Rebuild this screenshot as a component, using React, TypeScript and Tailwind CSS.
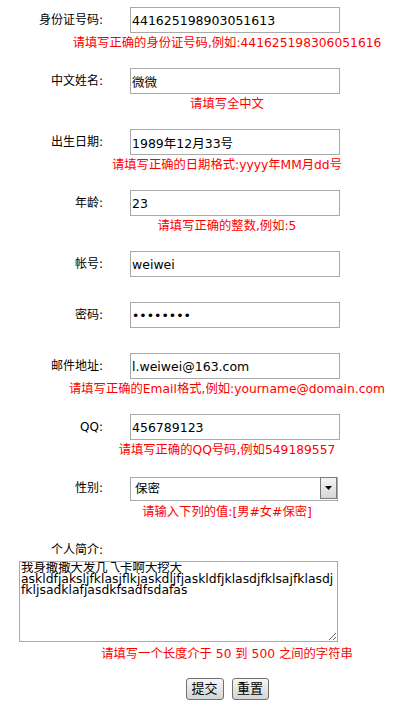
import React from "react";

const font = { fontFamily: '"DejaVu Sans", "Noto Sans CJK SC", sans-serif' };

type FieldProps = {
  label: string;
  value: string;
  type?: string;
  error?: string;
  className?: string;
};

const Field: React.FC<FieldProps> = ({ label, value, type = "text", error, className = "" }) => {
  return (
    <div className={className}>
      <div className="flex h-[26px] items-center">
        <label className="w-[103px] text-right text-[12px] leading-[14px] text-black">{label}</label>
        <input
          type={type}
          defaultValue={value}
          className="ml-[27px] h-[26px] w-[210px] border border-[#a9a9a9] bg-white px-[1px] text-[12.5px] text-black outline-none"
          style={font}
        />
      </div>
      {error && (
        <p className="mt-[3px] h-[14px] pl-[38px] text-center text-[12.3px] leading-[14px] whitespace-nowrap text-[#ff0000]">
          {error}
        </p>
      )}
    </div>
  );
};

const bio =
  "我身撒撒大发几乁卡啊大挖大\naskldfjaksljfklasjflkjaskdljfjaskldfjklasdjfklsajfklasdj\nfkljsadklafjasdkfsadfsdafas";

export default function App() {
  return (
    <div className="min-h-[720px] w-full bg-white pt-[7px]" style={font}>
      <Field
        label="身份证号码:"
        value="441625198903051613"
        error="请填写正确的身份证号码,例如:441625198306051616"
      />
      <Field className="mt-[18px]" label="中文姓名:" value="微微" error="请填写全中文" />
      <Field
        className="mt-[18px]"
        label="出生日期:"
        value="1989年12月33号"
        error="请填写正确的日期格式:yyyy年MM月dd号"
      />
      <Field className="mt-[18px]" label="年龄:" value="23" error="请填写正确的整数,例如:5" />
      <Field className="mt-[18px]" label="帐号:" value="weiwei" />
      <Field className="mt-[25px]" label="密码:" value="12345678" type="password" />
      <Field
        className="mt-[25px]"
        label="邮件地址:"
        value="l.weiwei@163.com"
        error="请填写正确的Email格式,例如:yourname@domain.com"
      />
      <Field className="mt-[18px]" label="QQ:" value="456789123" error="请填写正确的QQ号码,例如549189557" />

      {/* gender select */}
      <div className="mt-[19px]">
        <div className="flex h-[24px] items-center">
          <label className="w-[103px] text-right text-[12px] leading-[14px] text-black">性别:</label>
          <div className="relative ml-[27px] h-[24px] w-[208px]">
            <select
              defaultValue="保密"
              className="h-full w-full appearance-none border border-[#a9a9a9] bg-white pl-[4px] text-[12.5px] text-black outline-none"
              style={font}
            >
              <option>男</option>
              <option>女</option>
              <option>保密</option>
            </select>
            <div className="pointer-events-none absolute top-[1px] right-[1px] flex h-[22px] w-[17px] items-center justify-center border border-[#7a7a7a] bg-linear-to-b from-[#f4f4f4] to-[#d6d6d6]">
              <svg width="7" height="4" viewBox="0 0 7 4">
                <path d="M0 0h7L3.5 4z" fill="#000" />
              </svg>
            </div>
          </div>
        </div>
        <p className="mt-[5px] h-[14px] pl-[38px] text-center text-[12.3px] leading-[14px] whitespace-nowrap text-[#ff0000]">
          请输入下列的值:[男#女#保密]
        </p>
      </div>

      {/* bio */}
      <div className="mt-[24px]">
        <label className="block w-[103px] text-right text-[12px] leading-[14px] text-black">个人简介:</label>
        <textarea
          defaultValue={bio}
          wrap="off"
          className="mt-[4px] ml-[19px] block h-[81px] w-[319px] overflow-hidden border border-[#a9a9a9] bg-white px-[1px] pt-0 text-[12.4px] leading-[11px] text-black outline-none"
          style={font}
        />
        <p className="mt-[5px] h-[14px] pl-[38px] text-center text-[12.3px] leading-[14px] whitespace-nowrap text-[#ff0000]">
          请填写一个长度介于 50 到 500 之间的字符串
        </p>
      </div>

      <div className="mt-[17px] flex justify-center gap-[8px] pl-[38px]">
        <button className="h-[22px] w-[38px] rounded-[3px] border border-[#707070] bg-linear-to-b from-[#f6f6f6] to-[#d4d4d4] text-[13px] leading-[20px] text-black">
          提交
        </button>
        <button className="h-[22px] w-[37px] rounded-[3px] border border-[#707070] bg-linear-to-b from-[#f6f6f6] to-[#d4d4d4] text-[13px] leading-[20px] text-black">
          重置
        </button>
      </div>
    </div>
  );
}
